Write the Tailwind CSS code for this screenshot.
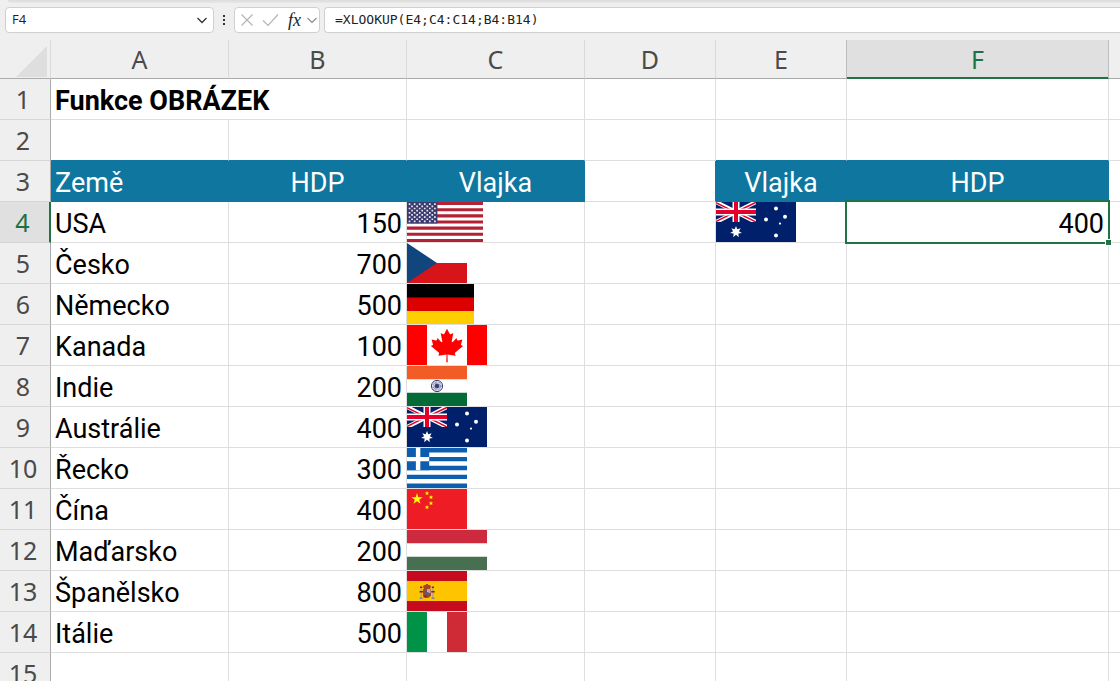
<!DOCTYPE html>
<html lang="cs">
<head>
<meta charset="utf-8">
<meta name="viewport" content="width=device-width, initial-scale=1">
<title>Funkce OBRÁZEK</title>
<script src="https://cdn.jsdelivr.net/npm/@tailwindcss/browser@4"></script>
</head>
<body class="h-screen overflow-hidden bg-white font-['Roboto',sans-serif] text-black">

<svg class="hidden" aria-hidden="true">
  <symbol id="au" viewBox="0 0 80 40">
    <path fill="#00206b" d="M0 0h80v40H0z"/>
    <svg width="40" height="20" viewBox="0 0 40 20">
      <path stroke="#fff" stroke-width="4.200" d="M0 0l40 20M40 0L0 20"/>
      <path stroke="#e4002b" stroke-width="1.500" d="M0 .7l20 10M20 10l20 10M40 .3L20 10M20 9.500L0 19.500"/>
      <path stroke="#fff" stroke-width="7" d="M20 0v20M0 10h40"/>
      <path stroke="#e4002b" stroke-width="4" d="M20 0v20M0 10h40"/>
    </svg>
    <path fill="#fff" d="M20 24l1.300 3.300 3.400-1-1.800 3 3 1.800-3.500.5.300 3.600-2.700-2.400-2.700 2.400.3-3.600-3.500-.5 3-1.800-1.800-3 3.400 1z"/>
    <g fill="#fff"><circle cx="60" cy="6.600" r="2"/><circle cx="50" cy="17.500" r="2"/><circle cx="69" cy="14.800" r="2"/><circle cx="64" cy="21.600" r="1.100"/><circle cx="60" cy="33.400" r="2"/></g>
  </symbol>
</svg>

<main class="flex h-full flex-col">
  <header class="flex h-10 shrink-0 flex-col bg-[#efefef]">
    <div class="ml-2 h-[3px] rounded-bl bg-linear-to-b from-[#dcdcdc] to-[#e8e8e8]"></div>
    <div class="mt-1 flex h-[26px] items-stretch pl-[5px]">
      <div class="flex w-[209px] items-center rounded border border-[#d0d0d0] bg-white">
        <input aria-label="Pole názvů" value="F4" class="min-w-0 flex-1 pl-1.5 font-['Open_Sans',sans-serif] text-[13px] text-[#222] outline-none">
        <button aria-label="Rozbalit pole názvů" class="flex w-[22px] items-center justify-center">
          <svg class="h-2 w-3" viewBox="0 0 12 8" fill="none" stroke="#333" stroke-width="1.300"><path d="M1.500 2L6 6.500 10.500 2"/></svg>
        </button>
      </div>
      <div class="flex w-5 items-center justify-center">
        <svg class="h-3 w-1" viewBox="0 0 4 12" fill="#333"><path d="M1 1h2v2H1zM1 5h2v2H1zM1 9h2v2H1z"/></svg>
      </div>
      <div class="flex w-[86px] items-center rounded border border-[#d0d0d0] bg-white pl-[5px]">
        <button aria-label="Zrušit" class="w-[22px]"><svg class="size-[14px]" viewBox="0 0 14 14" fill="none" stroke="#b5b5b5" stroke-width="1.200"><path d="M1.500 1.500l11 11M12.500 1.500l-11 11"/></svg></button>
        <button aria-label="Zadat" class="w-[26px]"><svg class="h-[14px] w-[17px]" viewBox="0 0 17 14" fill="none" stroke="#b5b5b5" stroke-width="1.200"><path d="M1 7.500L6 12.500 16 1.500"/></svg></button>
        <button aria-label="Vložit funkci" class="w-[18px] text-left font-['Liberation_Serif',serif] text-lg leading-5 text-[#222] italic"><i>fx</i></button>
        <button aria-label="Možnosti funkcí"><svg class="h-2 w-3" viewBox="0 0 12 8" fill="none" stroke="#888" stroke-width="1.100"><path d="M1.500 2L6 6.500 10.500 2"/></svg></button>
      </div>
      <input aria-label="Řádek vzorců" value="=XLOOKUP(E4;C4:C14;B4:B14)" class="ml-1 min-w-0 flex-1 rounded-l border border-r-0 border-[#d0d0d0] bg-white pl-2.5 font-['DejaVu_Sans_Mono',monospace] text-[13px] text-[#222] outline-none">
    </div>
  </header>

  <div class="min-h-0 flex-1 overflow-hidden">
    <table class="w-full table-fixed border-separate border-spacing-0 text-[27px] leading-9 [&_td]:h-[41px] [&_td]:border-r [&_td]:border-b [&_td]:border-[#dedede] [&_td]:p-0 [&_td:not(:has(svg))]:pt-1 [&_tr>*:last-child]:border-r-0 [&_tbody_th]:h-[41px] [&_tbody_th]:border-r [&_tbody_th]:border-b [&_tbody_th]:border-r-[#ababab] [&_tbody_th]:border-b-[#d6d6d6] [&_tbody_th]:bg-[#efefef] [&_tbody_th]:p-0 [&_tbody_th]:pr-1 [&_tbody_th]:font-['Noto_Sans',sans-serif] [&_tbody_th]:text-[25px] [&_tbody_th]:font-normal [&_tbody_th]:text-[#4a4a4a]">
      <colgroup>
        <col class="w-[51px]"><col class="w-[178px]"><col class="w-[178px]"><col class="w-[178px]"><col class="w-[131px]"><col class="w-[131px]"><col class="w-[262px]"><col>
      </colgroup>
      <thead>
        <tr class="h-[39px] bg-[#efefef] font-['Noto_Sans',sans-serif] text-[25px] leading-9 text-[#4a4a4a] [&>th]:border-r [&>th]:border-b [&>th]:border-r-[#d9d9d9] [&>th]:border-b-[#ababab] [&>th]:p-0 [&>th]:font-normal">
          <th aria-label="Vybrat vše"><svg class="mt-1 ml-4 h-[31px] w-[31px]" viewBox="0 0 31 31"><path fill="#dedede" d="M31 0v31H0z"/></svg></th>
          <th scope="col">A</th><th scope="col">B</th><th scope="col">C</th><th scope="col">D</th><th scope="col" class="border-r-[#bdbdbd]!">E</th>
          <th scope="col" class="border-r-[#bdbdbd]! border-b-[#217346]! bg-[#e0e0e0] text-[#1e7145] shadow-[inset_0_-1px_0_#217346]">F</th>
          <th></th>
        </tr>
      </thead>
      <tbody>
        <tr><th scope="row">1</th><td colspan="2" class="pl-1! text-[27px] font-bold">Funkce OBRÁZEK</td><td></td><td></td><td></td><td></td><td></td></tr>
        <tr><th scope="row">2</th><td class="border-b-[#0e769f]!"></td><td class="border-b-[#0e769f]!"></td><td class="border-b-[#0e769f]!"></td><td></td><td class="border-b-[#0e769f]!"></td><td class="border-b-[#0e769f]!"></td><td></td></tr>
        <tr class="text-center text-white">
          <th scope="row">3</th>
          <td class="border-[#0e769f]! bg-[#0e769f] pl-1! text-left">Země</td>
          <td class="border-[#0e769f]! bg-[#0e769f]">HDP</td>
          <td class="border-[#0e769f]! bg-[#0e769f]">Vlajka</td>
          <td class="border-r-[#0e769f]!"></td>
          <td class="border-[#0e769f]! bg-[#0e769f]">Vlajka</td>
          <td class="border-[#0e769f]! bg-[#0e769f]">HDP</td>
          <td></td>
        </tr>
        <tr>
          <th scope="row" class="border-r-2! border-r-[#217346]! bg-[#e0e0e0]! text-[#1e7145]!">4</th>
          <td class="pl-1!">USA</td><td class="pr-1! text-right">150</td>
          <td><svg role="img" aria-label="USA" class="block h-10 w-[76px]" viewBox="0 0 76 40">
            <path fill="#fff" d="M0 0h76v40H0z"/>
            <path stroke="#b22234" stroke-width="3.080" d="M0 1.540h76M0 7.700h76M0 13.850h76M0 20h76M0 26.150h76M0 32.300h76M0 38.460h76"/>
            <path fill="#3c3b6e" d="M0 0h30.400v21.500H0z"/>
            <g stroke="#e8e8f2" stroke-width="1.700" stroke-dasharray="1.700 3.370"><path d="M1.700 2.200h28M1.700 6.500h28M1.700 10.800h28M1.700 15.100h28M1.700 19.400h28"/><path d="M4.200 4.350h23.600M4.200 8.650h23.600M4.200 12.950h23.600M4.200 17.250h23.600"/></g>
          </svg></td>
          <td></td>
          <td><svg role="img" aria-label="Austrálie" class="block h-10 w-20"><use href="#au"/></svg></td>
          <td class="relative pr-1! text-right">400
            <span class="pointer-events-none absolute -inset-0.5 border-2 border-[#217346]"></span>
            <span class="absolute -right-1 -bottom-1 size-[7px] border border-white bg-[#217346]"></span>
          </td>
          <td></td>
        </tr>
        <tr><th scope="row">5</th><td class="pl-1!">Česko</td><td class="pr-1! text-right">700</td>
          <td><svg role="img" aria-label="Česko" class="block h-10 w-[60px]" viewBox="0 0 60 40"><path fill="#fff" d="M0 0h60v20H0z"/><path fill="#d7141a" d="M0 20h60v20H0z"/><path fill="#11457e" d="M0 0l30 20L0 40z"/></svg></td>
          <td></td><td></td><td></td><td></td></tr>
        <tr><th scope="row">6</th><td class="pl-1!">Německo</td><td class="pr-1! text-right">500</td>
          <td><svg role="img" aria-label="Německo" class="block h-10 w-[67px]" viewBox="0 0 67 40"><path d="M0 0h67v14H0z"/><path fill="#d00" d="M0 13.500h67V27H0z"/><path fill="#ffce00" d="M0 27h67v13H0z"/></svg></td>
          <td></td><td></td><td></td><td></td></tr>
        <tr><th scope="row">7</th><td class="pl-1!">Kanada</td><td class="pr-1! text-right">100</td>
          <td><svg role="img" aria-label="Kanada" class="block h-10 w-20" viewBox="0 0 80 40"><path fill="#fff" d="M0 0h80v40H0z"/><path fill="#f00" d="M0 0h20v40H0zM60 0h20v40H60zM40 3.800l-2.800 5.100c-.3.600-.9.500-1.500.2l-2-1 1.500 7.900c.3 1.400-.7 1.400-1.200.8L30.500 13l-.6 2c-.1.300-.4.500-.8.500l-4.500-1 1.200 4.300c.2.900.4 1.300-.3 1.500l-1.600.8 7.800 6.300c.3.200.5.700.4 1.100l-.7 2.200 8.100-1.100-.2 7.600h1.400l-.2-7.600 8.100 1.100-.7-2.200c-.1-.4.100-.9.400-1.100l7.800-6.300-1.600-.8c-.7-.2-.5-.6-.3-1.500l1.200-4.300-4.500 1c-.4 0-.7-.2-.8-.5l-.6-2-3.500 3.800c-.5.600-1.500.6-1.200-.8l1.500-7.900-2 1c-.6.300-1.200.4-1.500-.2z"/></svg></td>
          <td></td><td></td><td></td><td></td></tr>
        <tr><th scope="row">8</th><td class="pl-1!">Indie</td><td class="pr-1! text-right">200</td>
          <td><svg role="img" aria-label="Indie" class="block h-10 w-[60px]" viewBox="0 0 60 40"><path fill="#fff" d="M0 0h60v40H0z"/><path fill="#f25c26" d="M0 0h60v13.300H0z"/><path fill="#046a38" d="M0 26.700h60V40H0z"/><g fill="none" stroke="#3a3e7c"><circle cx="30" cy="20" r="5.600"/><circle cx="30" cy="20" r="3" stroke-width="3.400" stroke-dasharray=".6 .5" opacity=".7"/></g><circle cx="30" cy="20" r="2.200" fill="#3a3e7c"/></svg></td>
          <td></td><td></td><td></td><td></td></tr>
        <tr><th scope="row">9</th><td class="pl-1!">Austrálie</td><td class="pr-1! text-right">400</td>
          <td><svg role="img" aria-label="Austrálie" class="block h-10 w-20"><use href="#au"/></svg></td>
          <td></td><td></td><td></td><td></td></tr>
        <tr><th scope="row">10</th><td class="pl-1!">Řecko</td><td class="pr-1! text-right">300</td>
          <td><svg role="img" aria-label="Řecko" class="block h-10 w-[60px]" viewBox="0 0 60 40"><path fill="#fff" d="M0 0h60v40H0z"/><path stroke="#0d5eaf" stroke-width="4.440" d="M0 2.220h60M0 11.110h60M0 20h60M0 28.890h60M0 37.780h60"/><path fill="#0d5eaf" d="M0 0h22.200v22.200H0z"/><path stroke="#fff" stroke-width="4.440" d="M11.100 0v22.200M0 11.100h22.200"/></svg></td>
          <td></td><td></td><td></td><td></td></tr>
        <tr><th scope="row">11</th><td class="pl-1!">Čína</td><td class="pr-1! text-right">400</td>
          <td><svg role="img" aria-label="Čína" class="block h-10 w-[60px]" viewBox="0 0 60 40"><path fill="#ee1c25" d="M0 0h60v40H0z"/><path fill="#ff0" d="M10 4l1.350 4.150h4.360l-3.530 2.560 1.350 4.150L10 12.300l-3.530 2.560 1.350-4.150-3.530-2.560h4.360z"/><path fill="#ff0" d="M20 2l.6 1.400 1.500.1-1.100 1 .4 1.500-1.400-.8-1.400.8.4-1.500-1.100-1 1.500-.1zM24 6l.6 1.400 1.500.1-1.100 1 .4 1.500-1.400-.8-1.400.8.4-1.500-1.100-1 1.500-.1zM24 12l.6 1.400 1.500.1-1.100 1 .4 1.500-1.400-.8-1.400.8.4-1.500-1.100-1 1.500-.1zM20 16l.6 1.400 1.500.1-1.100 1 .4 1.500-1.400-.8-1.400.8.4-1.500-1.100-1 1.500-.1z"/></svg></td>
          <td></td><td></td><td></td><td></td></tr>
        <tr><th scope="row">12</th><td class="pl-1!">Maďarsko</td><td class="pr-1! text-right">200</td>
          <td><svg role="img" aria-label="Maďarsko" class="block h-10 w-20" viewBox="0 0 80 40"><path fill="#fff" d="M0 0h80v40H0z"/><path fill="#cd2a3e" d="M0 0h80v13.300H0z"/><path fill="#477050" d="M0 26.700h80V40H0z"/></svg></td>
          <td></td><td></td><td></td><td></td></tr>
        <tr><th scope="row">13</th><td class="pl-1!">Španělsko</td><td class="pr-1! text-right">800</td>
          <td><svg role="img" aria-label="Španělsko" class="block h-10 w-[60px]" viewBox="0 0 60 40"><path fill="#c60b1e" d="M0 0h60v40H0z"/><path fill="#ffc400" d="M0 10h60v20H0z"/>
            <path fill="#a8422c" d="M16 15.500q0-1.500 3-1.700v-.8h2v.8q3 .2 3 1.700l-1 2.500h-6z"/><path fill="#8f4a3c" d="M16 18h8v6.500q-4 5-8 0z"/><path fill="#c9a9a8" d="M20 18h3.500v4H20z"/><path fill="#4a6192" d="M18.500 21h3v2.500h-3z"/><path fill="#a8a29a" d="M13.500 17h1.400v10h-1.400zM25.200 17h1.400v10h-1.400z"/><path fill="#ad1519" d="M12.500 20h3.500v1.500h-3.500zM24.200 20h3.500v1.500h-3.500zM16.500 24.500h3v2h-3zM13 15.500h2.300V17H13zM24.800 15.500H27V17h-2.200z"/><path fill="#8a7d8c" d="M12.700 26.500h2.800V28h-2.800zM24.600 26.500h2.800V28h-2.800z"/></svg></td>
          <td></td><td></td><td></td><td></td></tr>
        <tr><th scope="row">14</th><td class="pl-1!">Itálie</td><td class="pr-1! text-right">500</td>
          <td><svg role="img" aria-label="Itálie" class="block h-10 w-[60px]" viewBox="0 0 60 40"><path fill="#fff" d="M0 0h60v40H0z"/><path fill="#009246" d="M0 0h20v40H0z"/><path fill="#ce2b37" d="M40 0h20v40H40z"/></svg></td>
          <td></td><td></td><td></td><td></td></tr>
        <tr><th scope="row">15</th><td></td><td></td><td></td><td></td><td></td><td></td><td></td></tr>
      </tbody>
    </table>
  </div>
</main>
</body>
</html>
